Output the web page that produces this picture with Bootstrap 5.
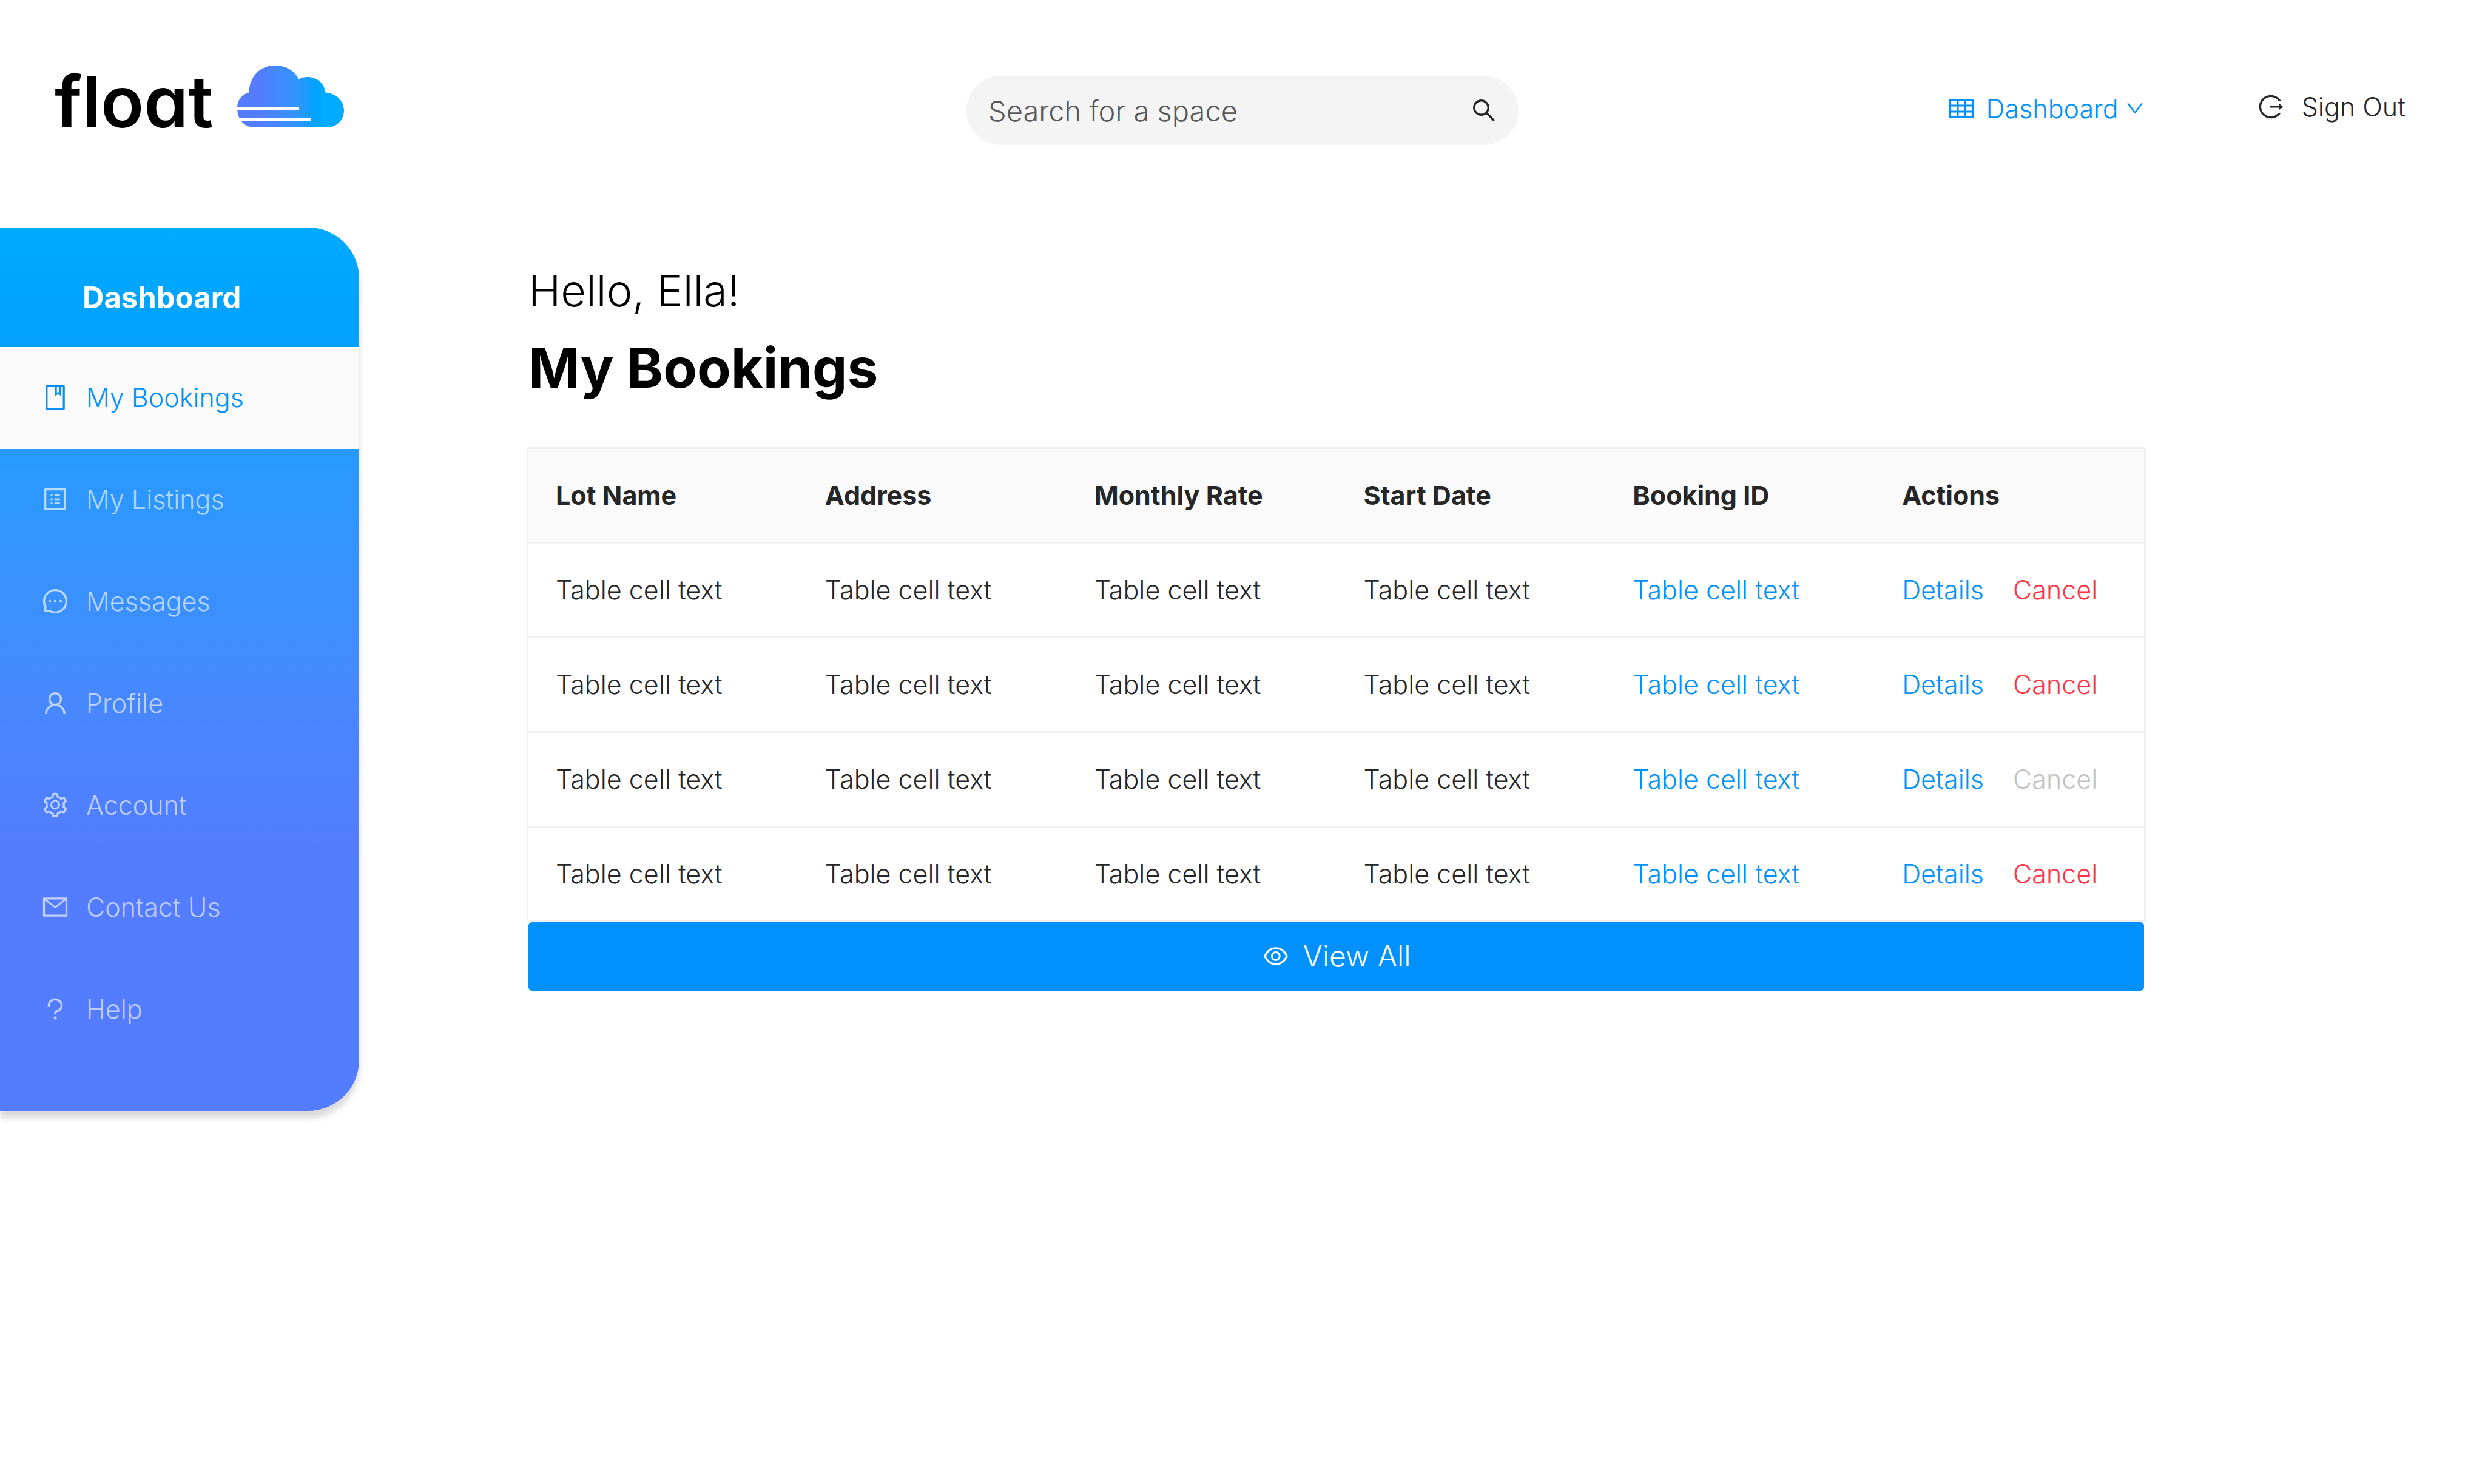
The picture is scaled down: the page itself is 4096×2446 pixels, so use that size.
<!DOCTYPE html>
<html lang="en">
<head>
<meta charset="utf-8">
<meta name="viewport" content="width=device-width, initial-scale=1">
<title>Float – My Bookings</title>
<link href="https://cdn.jsdelivr.net/npm/bootstrap@5.3.0/dist/css/bootstrap.min.css" rel="stylesheet">
<style>
  :root { --azure: #0091ff; --ink: #262626; --line: #f0f0f0; }
  body { font-family: Inter, "Open Sans", sans-serif; font-size: 43px; line-height: 52px; font-weight: 300; color: var(--ink); background: #fff; }
  a { text-decoration: none; }
  .ico { width: 46px; height: 46px; fill: currentColor; flex: none; }
  .ico-sm { width: 34px; height: 34px; }

  .topbar { padding: 108px 90px 136px; }
  .topbar-side { flex: 1 1 0; }
  .brand { gap: 39px; color: #000; }
  .brand-name { font-size: 117px; line-height: 112px; font-weight: 600; font-feature-settings: "cv11"; }
  .brand-cloud { width: 176px; height: 102px; }
  .finder { width: 910px; height: 114px; margin-top: 17px; padding: 0 34px 0 36px; border-radius: 57px; background: #f4f4f4; }
  .finder input { height: 100%; font-size: 47px; line-height: 72px; font-weight: 300; color: #595959; }
  .finder input::placeholder { color: #595959; opacity: 1; }
  .finder input, .finder input:focus { background: transparent; box-shadow: none; }
  .plain-btn { font-size: inherit; line-height: inherit; font-weight: inherit; border: 0; padding: 0; color: inherit; }
  .user-nav { gap: 184px; margin-top: 42px; }
  .menu-btn { color: var(--azure); gap: 18px; margin-top: 3px; }
  .menu-btn .ico-sm { margin-left: -8px; }
  .signout { color: var(--ink); gap: 28px; margin-right: 41px; }

  .sidebar { width: 592px; padding-bottom: 83px; border-radius: 0 84px 84px 0; box-shadow: 0 12px 11px rgba(0, 0, 0, .15);
    background: linear-gradient(#00aaff 0%, #00a2ff 11.5%, #2699ff 25%, #3394ff 36%, #4688ff 53%, #547cff 72%); }
  .sidebar-title { height: 197px; padding: 34px 0 0 136px; font-size: 49px; line-height: 52px; font-weight: 700; color: #fff; }
  .side-link { height: 168px; padding: 0 68px 3px; gap: 28px; color: rgba(255, 255, 255, .65); }
  .side-link.active { background: #fafafa; color: var(--azure); }

  .content { padding: 60px 559px 200px 276px; }
  .greeting { font-size: 72px; line-height: 88px; font-weight: 300; color: #000; padding-left: 3px; margin-bottom: 31px; }
  .page-title { font-size: 91px; line-height: 104px; font-weight: 700; color: #000; padding-left: 3px; margin-bottom: 79px; }
  .bookings { border: 3px solid var(--line); border-bottom: 0; border-radius: 6px 6px 0 0; }
  .bookings table { table-layout: fixed; }
  .bookings th, .bookings td { height: 156px; padding: 0 0 0 45px; border-bottom: 3px solid var(--line); color: var(--ink); vertical-align: middle; white-space: nowrap; }
  .bookings th { height: 154px; background: #fafafa; font-weight: 700; }
  .bookings a { color: var(--azure); }
  .bookings .cancel { color: #ff3344; margin-left: 48px; vertical-align: baseline; }
  .bookings .cancel:disabled { color: #bfbfbf; opacity: 1; }
  .view-all { height: 113px; margin: 0 3px; border: 0; border-radius: 6px; background: var(--azure); color: #fff; font-size: 48px; font-weight: 300; gap: 22px; }
</style>
</head>
<body class="min-vh-100">
<header class="topbar d-flex align-items-start">
  <div class="topbar-side d-flex">
    <a href="#" class="brand d-flex align-items-baseline">
      <span class="brand-name">float</span>
      <svg class="brand-cloud" viewBox="0 0 176 102" aria-hidden="true">
        <defs><linearGradient id="sky"><stop offset=".2" stop-color="#547cff"/><stop offset=".57" stop-color="#2f96ff"/><stop offset=".74" stop-color="#00a3ff"/><stop offset=".8" stop-color="#00aaff"/></linearGradient></defs>
        <path fill="url(#sky)" d="M0 70C0 57 8 47 19.500 44.500C20 18 38 0 62 0C80 0 94 8 101.500 22.500C106 20 110 19 116 19C132 19 144 30 145.500 44.500C163 46 176 58 176 74C176 90 164 102 148 102H28C11 102 0 88 0 70Z"/>
        <path fill="#fff" d="M0 69h102v5H0zM0 87h122v5H0z"/>
      </svg>
    </a>
  </div>
  <form class="finder d-flex align-items-center" role="search">
    <input type="text" class="form-control border-0 p-0" placeholder="Search for a space" aria-label="Search for a space">
    <button type="button" class="btn plain-btn d-flex" aria-label="Search">
      <svg class="ico" viewBox="0 0 1024 1024"><path d="M909.600 854.500L649.900 594.800C690.200 542.700 712 479 712 412c0-80.200-31.300-155.400-87.900-212.100-56.600-56.700-132-87.900-212.100-87.900s-155.500 31.300-212.100 87.900C143.200 256.500 112 331.800 112 412c0 80.100 31.300 155.500 87.900 212.100C256.500 680.800 331.800 712 412 712c67 0 130.600-21.800 182.700-62l259.700 259.600a8.200 8.200 0 0011.600 0l43.600-43.500a8.200 8.200 0 000-11.600zM570.400 570.400C528 612.700 471.800 636 412 636s-116-23.300-158.400-65.600C211.300 528 188 471.800 188 412s23.300-116.100 65.600-158.400C296 211.300 352.200 188 412 188s116.100 23.200 158.400 65.600S636 352.200 636 412s-23.300 116.100-65.600 158.400z"/></svg>
    </button>
  </form>
  <nav class="topbar-side user-nav d-flex justify-content-end align-items-start">
    <button type="button" class="btn plain-btn menu-btn d-flex align-items-center">
      <svg class="ico" viewBox="0 0 1024 1024"><path d="M928 160H96c-17.700 0-32 14.300-32 32v640c0 17.700 14.300 32 32 32h832c17.700 0 32-14.300 32-32V192c0-17.700-14.300-32-32-32zm-40 208H676V232h212v136zm0 224H676V432h212v160zM412 432h200v160H412V432zm200-64H412V232h200v136zm-476 64h212v160H136V432zm0-200h212v136H136V232zm0 424h212v136H136V656zm276 0h200v136H412V656zm476 136H676V656h212v136z"/></svg>
      <span>Dashboard</span>
      <svg class="ico ico-sm" viewBox="0 0 1024 1024"><path d="M884 256h-75c-5.100 0-9.900 2.500-12.900 6.600L512 654.200 227.900 262.600c-3-4.100-7.800-6.600-12.900-6.600h-75c-6.500 0-10.300 7.400-6.500 12.700l352.600 486.100c12.800 17.600 39 17.600 51.700 0l352.600-486.100c3.900-5.300.1-12.700-6.400-12.700z"/></svg>
    </button>
    <a href="#" class="signout d-flex align-items-center">
      <svg class="ico" viewBox="0 0 1024 1024"><path d="M868 732h-70.300c-4.800 0-9.300 2.100-12.300 5.800-7 8.500-14.500 16.700-22.400 24.500a353.840 353.840 0 01-112.700 75.900A352.800 352.800 0 01512.400 866c-47.900 0-94.300-9.400-137.900-27.800a353.840 353.840 0 01-112.700-75.900 353.280 353.280 0 01-76-112.500C167.300 606.200 158 559.900 158 512s9.400-94.200 27.800-137.800c17.800-42.100 43.400-80 76-112.500s70.500-58.100 112.700-75.900c43.600-18.400 90-27.800 137.900-27.800 47.900 0 94.300 9.300 137.900 27.800 42.200 17.800 80.100 43.400 112.700 75.900 7.900 7.900 15.300 16.100 22.400 24.500 3 3.700 7.600 5.800 12.300 5.800H868c6.300 0 10.200-7 6.700-12.300C798 160.500 663.800 81.600 511.300 82 271.700 82.600 79.600 277.100 82 516.400 84.400 751.900 276.200 942 512.400 942c152.100 0 285.700-78.800 362.300-197.700 3.400-5.300-.4-12.300-6.700-12.300zm88.900-226.300L815 393.700c-5.300-4.200-13-.4-13 6.300v76H488c-4.400 0-8 3.600-8 8v56c0 4.400 3.600 8 8 8h314v76c0 6.700 7.800 10.500 13 6.300l141.900-112a8 8 0 000-12.600z"/></svg>
      <span>Sign Out</span>
    </a>
  </nav>
</header>

<div class="d-flex align-items-start">
  <aside class="sidebar flex-shrink-0">
    <div class="sidebar-title d-flex align-items-center"><span>Dashboard</span></div>
    <nav class="d-flex flex-column">
      <a href="#" class="side-link active d-flex align-items-center" aria-current="page">
        <svg class="ico" viewBox="0 0 1024 1024"><path d="M832 64H192c-17.700 0-32 14.300-32 32v832c0 17.700 14.300 32 32 32h640c17.700 0 32-14.300 32-32V96c0-17.700-14.300-32-32-32zm-260 72h96v209.900L621.500 312 572 347.400V136zm220 752H232V136h280v296.900c0 3.300 1 6.600 3 9.300a15.900 15.900 0 0022.300 3.700l83.800-59.900 81.400 59.400c2.700 2 6 3.100 9.400 3.100 8.800 0 16-7.200 16-16V136h64v752z"/></svg>
        <span>My Bookings</span></a>
      <a href="#" class="side-link d-flex align-items-center">
        <svg class="ico" viewBox="0 0 1024 1024"><path d="M880 112H144c-17.700 0-32 14.300-32 32v736c0 17.700 14.300 32 32 32h736c17.700 0 32-14.300 32-32V144c0-17.700-14.300-32-32-32zm-40 728H184V184h656v656zM484 336h200v64H484zM484 480h200v64H484zM484 624h200v64H484zM340 368a40 40 0 1080 0 40 40 0 10-80 0zm0 144a40 40 0 1080 0 40 40 0 10-80 0zm0 144a40 40 0 1080 0 40 40 0 10-80 0z"/></svg>
        <span>My Listings</span></a>
      <a href="#" class="side-link d-flex align-items-center">
        <svg class="ico" viewBox="0 0 1024 1024"><path d="M464 512a48 48 0 1096 0 48 48 0 10-96 0zm200 0a48 48 0 1096 0 48 48 0 10-96 0zm-400 0a48 48 0 1096 0 48 48 0 10-96 0zm661.200-173.600c-22.600-53.700-55-101.900-96.300-143.300a444.350 444.350 0 00-143.300-96.300C630.600 75.700 572.200 64 512 64h-2c-60.600.3-119.300 12.300-174.500 35.900a445.350 445.350 0 00-142 96.500c-40.900 41.300-73 89.300-95.200 142.800-23 55.400-34.600 114.300-34.300 174.900A449.400 449.400 0 00112 714v152a46 46 0 0046 46h152.100A449.400 449.400 0 00510 960h2.100c59.900 0 118-11.600 172.700-34.300a444.480 444.480 0 00142.800-95.200c41.300-40.900 73.800-88.700 96.500-142 23.600-55.200 35.600-113.900 35.900-174.500.3-60.900-11.500-120-34.800-175.600zm-151.100 438C704 845.800 611 884 512 884h-1.700c-60.300-.3-120.200-15.300-173.100-43.500l-8.400-4.500H188V695.200l-4.500-8.400C155.300 633.900 140.300 574 140 513.700c-.4-99.700 37.700-193.300 107.600-263.800 69.800-70.500 163.100-109.500 262.800-109.900h1.700c50 0 98.500 9.700 144.200 28.900 44.600 18.700 84.600 45.600 119 80 34.300 34.300 61.300 74.400 80 119 19.400 46.200 29.100 95.200 28.900 145.800-.6 99.600-39.700 192.900-110.100 262.700z"/></svg>
        <span>Messages</span></a>
      <a href="#" class="side-link d-flex align-items-center">
        <svg class="ico" viewBox="0 0 1024 1024"><path d="M858.500 763.600a374 374 0 00-80.600-119.500 375.630 375.630 0 00-119.500-80.600c-.4-.2-.8-.3-1.200-.5C719.500 518 760 444.700 760 362c0-137-111-248-248-248S264 225 264 362c0 82.700 40.500 156 102.800 201.100-.4.2-.8.3-1.200.5-44.800 18.900-85 46-119.500 80.600a375.630 375.630 0 00-80.600 119.500A371.700 371.700 0 00136 901.800a8 8 0 008 8.200h60c4.400 0 7.900-3.500 8-7.800 2-77.200 33-149.500 87.800-204.300 56.700-56.700 132-87.900 212.200-87.900s155.500 31.200 212.200 87.900C779 752.700 810 825 812 902.200c.1 4.400 3.600 7.800 8 7.800h60a8 8 0 008-8.200c-1-47.800-10.900-94.300-29.500-138.200zM512 534c-45.900 0-89.100-17.900-121.600-50.400S340 407.900 340 362c0-45.900 17.900-89.100 50.400-121.600S466.100 190 512 190s89.100 17.900 121.600 50.400S684 316.100 684 362c0 45.900-17.900 89.100-50.400 121.600S557.900 534 512 534z"/></svg>
        <span>Profile</span></a>
      <a href="#" class="side-link d-flex align-items-center">
        <svg class="ico" viewBox="0 0 1024 1024"><path d="M924.800 625.700l-65.500-56c3.100-19 4.700-38.400 4.700-57.800s-1.600-38.800-4.700-57.800l65.500-56a32.030 32.030 0 009.300-35.200l-.9-2.600a443.740 443.740 0 00-79.700-137.900l-1.800-2.100a32.120 32.120 0 00-35.100-9.500l-81.300 28.900c-30-24.600-63.500-44-99.700-57.600l-15.700-85a32.050 32.050 0 00-25.800-25.700l-2.700-.5c-52.100-9.400-106.900-9.400-159 0l-2.700.5a32.050 32.050 0 00-25.800 25.700l-15.800 85.400a351.860 351.860 0 00-99 57.400l-81.900-29.100a32 32 0 00-35.100 9.500l-1.800 2.100a446.020 446.020 0 00-79.700 137.900l-.9 2.600c-4.500 12.500-.8 26.500 9.300 35.200l66.300 56.600c-3.100 18.800-4.600 38-4.600 57.100 0 19.200 1.500 38.400 4.600 57.100L99 625.500a32.030 32.030 0 00-9.300 35.200l.9 2.600c18.100 50.400 44.900 96.900 79.700 137.900l1.800 2.100a32.120 32.120 0 0035.100 9.500l81.900-29.100c29.800 24.500 63.100 43.900 99 57.400l15.800 85.400a32.050 32.050 0 0025.800 25.700l2.700.5a449.400 449.400 0 00159 0l2.700-.5a32.050 32.050 0 0025.800-25.700l15.700-85a350 350 0 0099.700-57.600l81.300 28.900a32 32 0 0035.100-9.500l1.800-2.100c34.800-41.100 61.600-87.500 79.700-137.900l.9-2.600c4.500-12.300.8-26.300-9.300-35zM788.300 465.900c2.500 15.100 3.800 30.600 3.800 46.100s-1.300 31-3.800 46.100l-6.600 40.100 74.700 63.900a370.030 370.030 0 01-42.600 73.600L721 702.800l-31.400 25.800c-23.900 19.600-50.500 35-79.300 45.800l-38.100 14.300-17.900 97a377.500 377.500 0 01-85 0l-17.900-97.200-37.800-14.500c-28.500-10.800-55-26.200-78.700-45.700l-31.400-25.900-93.400 33.200c-17-22.900-31.200-47.600-42.600-73.600l75.500-64.500-6.500-40c-2.400-14.900-3.700-30.300-3.700-45.500 0-15.300 1.200-30.600 3.700-45.500l6.500-40-75.500-64.500c11.300-26.100 25.600-50.700 42.600-73.600l93.400 33.200 31.400-25.900c23.700-19.500 50.200-34.900 78.700-45.700l37.900-14.300 17.900-97.200c28.100-3.200 56.800-3.200 85 0l17.900 97 38.100 14.300c28.700 10.800 55.400 26.200 79.300 45.800l31.400 25.800 92.800-32.900c17 22.900 31.200 47.600 42.600 73.600L781.800 426l6.500 39.900zM512 326c-97.200 0-176 78.800-176 176s78.800 176 176 176 176-78.800 176-176-78.800-176-176-176zm79.200 255.200A111.600 111.600 0 01512 614c-29.900 0-58-11.700-79.200-32.800A111.600 111.600 0 01400 502c0-29.900 11.700-58 32.800-79.200C454 401.600 482.100 390 512 390c29.900 0 58 11.600 79.200 32.800A111.600 111.600 0 01624 502c0 29.900-11.700 58-32.800 79.200z"/></svg>
        <span>Account</span></a>
      <a href="#" class="side-link d-flex align-items-center">
        <svg class="ico" viewBox="0 0 1024 1024"><path d="M928 160H96c-17.700 0-32 14.300-32 32v640c0 17.700 14.300 32 32 32h832c17.700 0 32-14.300 32-32V192c0-17.700-14.300-32-32-32zm-40 110.800V792H136V270.800l-27.600-21.500 39.300-50.500 42.800 33.300h643.100l42.800-33.300 39.300 50.500-27.700 21.500zM833.600 232L512 482 190.400 232l-42.800-33.300-39.300 50.500 27.600 21.500 341.600 265.600a55.990 55.990 0 0068.700 0L888 270.800l27.600-21.500-39.300-50.500-42.700 33.200z"/></svg>
        <span>Contact Us</span></a>
      <a href="#" class="side-link d-flex align-items-center">
        <svg class="ico" viewBox="0 0 1024 1024"><path d="M764 280.900c-14-30.600-33.900-58.100-59.300-81.600C653.100 151.400 584.600 125 512 125s-141.100 26.400-192.700 74.200c-25.400 23.600-45.300 51-59.300 81.700-14.600 32-22 65.900-22 100.900v27c0 6.200 5 11.200 11.200 11.200h54c6.200 0 11.200-5 11.200-11.200v-27c0-99.500 88.600-180.400 197.600-180.400s197.600 80.900 197.600 180.400c0 40.800-14.500 79.200-42 111.200-27.200 31.700-65.600 54.400-108.100 64-24.300 5.500-46.200 19.200-61.700 38.800a110.850 110.850 0 00-23.900 68.600v31.400c0 6.200 5 11.200 11.200 11.200h54c6.200 0 11.200-5 11.200-11.200v-31.400c0-15.700 10.900-29.500 26-32.900 58.400-13.200 111.400-44.700 149.300-88.700 19.100-22.300 34-47.100 44.300-74 10.700-27.900 16.100-57.200 16.100-87 0-35-7.400-69-22-100.900zM512 787c-30.900 0-56 25.100-56 56s25.100 56 56 56 56-25.100 56-56-25.100-56-56-56z"/></svg>
        <span>Help</span></a>
    </nav>
  </aside>

  <main class="content flex-grow-1">
    <p class="greeting">Hello, Ella!</p>
    <h1 class="page-title">My Bookings</h1>
    <div class="bookings overflow-hidden">
      <table class="table mb-0">
        <thead>
          <tr><th scope="col">Lot Name</th><th scope="col">Address</th><th scope="col">Monthly Rate</th><th scope="col">Start Date</th><th scope="col">Booking ID</th><th scope="col">Actions</th></tr>
        </thead>
        <tbody>
          <tr><td>Table cell text</td><td>Table cell text</td><td>Table cell text</td><td>Table cell text</td><td><a href="#">Table cell text</a></td><td><a href="#">Details</a><button type="button" class="btn plain-btn cancel">Cancel</button></td></tr>
          <tr><td>Table cell text</td><td>Table cell text</td><td>Table cell text</td><td>Table cell text</td><td><a href="#">Table cell text</a></td><td><a href="#">Details</a><button type="button" class="btn plain-btn cancel">Cancel</button></td></tr>
          <tr><td>Table cell text</td><td>Table cell text</td><td>Table cell text</td><td>Table cell text</td><td><a href="#">Table cell text</a></td><td><a href="#">Details</a><button type="button" class="btn plain-btn cancel" disabled>Cancel</button></td></tr>
          <tr><td>Table cell text</td><td>Table cell text</td><td>Table cell text</td><td>Table cell text</td><td><a href="#">Table cell text</a></td><td><a href="#">Details</a><button type="button" class="btn plain-btn cancel">Cancel</button></td></tr>
        </tbody>
      </table>
    </div>
    <div class="d-flex">
      <button type="button" class="btn view-all flex-grow-1 d-flex align-items-center justify-content-center">
        <svg class="ico" viewBox="0 0 1024 1024"><path d="M942.200 486.200C847.400 286.500 704.100 186 512 186c-192.200 0-335.400 100.500-430.200 300.300a60.300 60.300 0 000 51.500C176.600 737.500 319.900 838 512 838c192.200 0 335.400-100.500 430.200-300.300 7.700-16.200 7.700-35 0-51.500zM512 766c-161.300 0-279.400-81.800-362.700-254C232.600 339.800 350.700 258 512 258c161.300 0 279.400 81.800 362.700 254C791.500 684.200 673.400 766 512 766zm-4-430c-97.200 0-176 78.800-176 176s78.800 176 176 176 176-78.800 176-176-78.800-176-176-176zm0 288c-61.900 0-112-50.100-112-112s50.100-112 112-112 112 50.100 112 112-50.100 112-112 112z"/></svg>
        <span>View All</span>
      </button>
    </div>
  </main>
</div>
<script src="https://cdn.jsdelivr.net/npm/bootstrap@5.3.0/dist/js/bootstrap.bundle.min.js"></script>
</body>
</html>
